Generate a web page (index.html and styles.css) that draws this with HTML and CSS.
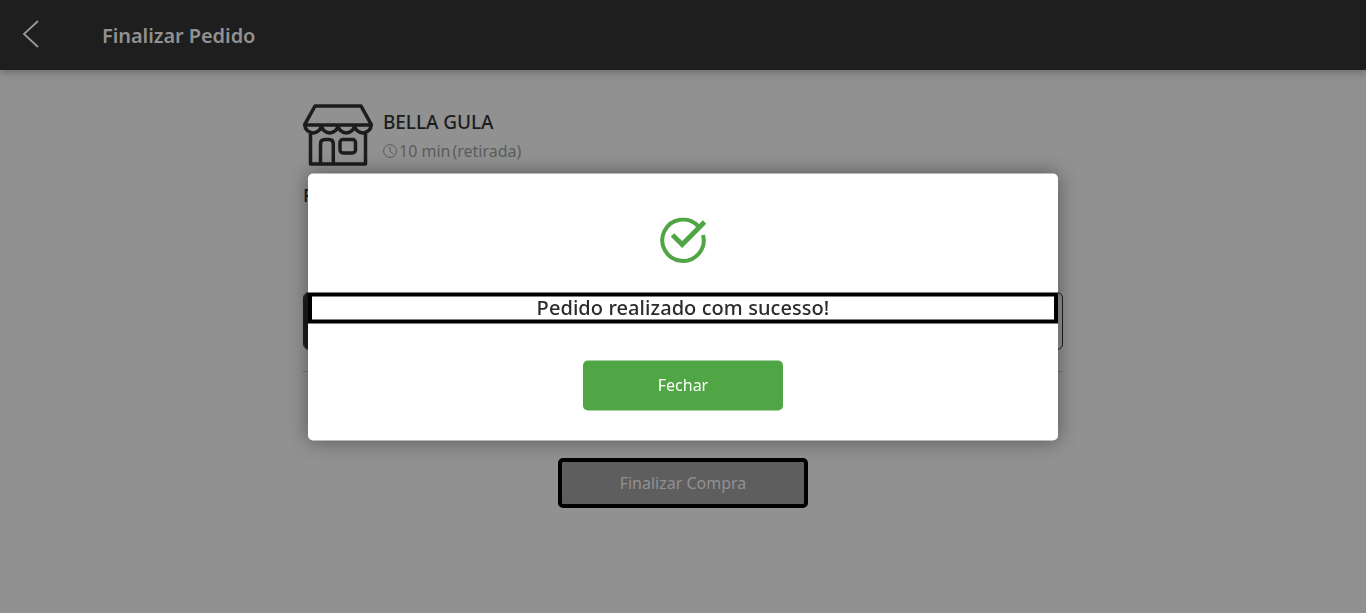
FILE: index.html
```html
<!DOCTYPE html>
<html lang="pt-BR">
<head>
<meta charset="utf-8">
<title>Finalizar Pedido</title>
<link rel="stylesheet" href="styles.css">
</head>
<body>
<header class="topbar">
  <svg class="back" viewBox="0 0 18 28"><path d="M16 1 2 14 16 27"/></svg>
  <h1 class="title">Finalizar Pedido</h1>
</header>
<main class="page">
  <section class="store">
    <svg class="store-icon" viewBox="0 0 70 62">
      <path d="M12 2H58L68.500 21H1.500ZM1.800 21A8.300 7.900 0 0 0 18.400 21A8.300 7.900 0 0 0 35 21A8.300 7.900 0 0 0 51.600 21A8.300 7.900 0 0 0 68.200 21M7.500 28V60H62.500V28M17.500 60V40Q17.500 35.500 22 35.500H26Q30.300 35.500 30.300 40V60"/>
      <rect x="37" y="35.500" width="15.500" height="13.500" rx="3"/>
    </svg>
    <div class="store-info">
      <h2 class="store-name">BELLA GULA</h2>
      <div class="store-time">
        <svg class="clock" viewBox="0 0 14 14"><circle cx="7" cy="7" r="6.400"/><path d="M7 3V7L10 10"/></svg>
        <span>10 min</span><span class="mode">(retirada)</span>
      </div>
    </div>
  </section>
  <h3 class="payment-title">F</h3>
  <div class="payment"><div class="payment-selected"></div></div>
  <hr class="divider">
  <button class="finish">Finalizar Compra</button>
</main>
<div class="overlay">
  <div class="modal" role="dialog">
    <svg class="check" viewBox="0 0 46 46"><path d="M38 8.500A20.700 20.700 0 1 0 43 17.500"/><path class="tick" d="M12.500 17.500 22.200 27 44.500 4.500"/></svg>
    <p class="message">Pedido realizado com sucesso!</p>
    <button class="close">Fechar</button>
  </div>
</div>
</body>
</html>
```
FILE: styles.css
```css
* { box-sizing: border-box; }
body {
  margin: 0;
  height: 613px;
  overflow: hidden;
  background: #919191;
  color: #1c1c1c;
  font-family: "Noto Sans", sans-serif;
}
h1, h2, h3, p { margin: 0; }
svg { display: block; fill: none; flex: none; }
button { display: block; font: 16px "Noto Sans", sans-serif; }
.topbar {
  display: flex;
  align-items: center;
  height: 70px;
  padding-left: 22px;
  background: #1e1e1e;
  box-shadow: 0 2px 8px rgba(0, 0, 0, .28);
}
.back { width: 18px; height: 28px; margin-bottom: 2px; stroke: #999; stroke-width: 1.8; }
.title { margin: 2px 0 0 62px; font-size: 20px; line-height: 28px; font-weight: 600; letter-spacing: -.07px; color: #919191; }
.page { width: 760px; margin: 0 auto; padding-top: 34px; }
.store { display: flex; height: 62px; gap: 10px; }
.store-icon { width: 70px; height: 62px; stroke: #1c1c1c; stroke-width: 3.5; stroke-linejoin: round; }
.store-name { padding-top: 4px; font-size: 19px; line-height: 28px; font-weight: 500; letter-spacing: -.07px; }
.store-time { display: flex; align-items: center; height: 24px; margin-top: 3px; font-size: 16px; color: #5c5c5c; }
.clock { width: 14px; height: 14px; margin-right: 2px; stroke: #5c5c5c; stroke-width: 1; }
.mode { margin-left: 2px; }
.payment-title { margin-top: 16px; font-size: 18px; line-height: 26px; font-weight: 500; }
.payment { height: 58px; margin-top: 84px; border: 1px solid #1c1c1c; border-radius: 6px; overflow: hidden; }
.payment-selected { width: 50%; height: 100%; background: #1c1c1c; }
.divider { height: 1px; margin: 21px 0 0; border: 0; background: #747474; }
.finish {
  width: 250px;
  height: 50px;
  margin: 86px auto 0;
  border: 4px solid #000;
  border-radius: 5px;
  background: #5e5e5e;
  color: #919191;
}
.overlay { position: fixed; inset: 0; display: flex; align-items: center; justify-content: center; }
.modal {
  width: 750px;
  height: 267px;
  padding-top: 44px;
  transform: translateY(.5px);
  border-radius: 5px;
  background: #fff;
  box-shadow: 0 0 20px rgba(0, 0, 0, .4);
}
.check { width: 46px; height: 46px; margin: 0 auto; stroke: #50a544; stroke-width: 4; }
.tick { stroke-width: 4.8; }
.message {
  height: 31px;
  margin-top: 29px;
  border: 4px solid #000;
  font-size: 20px;
  line-height: 21px;
  font-weight: 500;
  letter-spacing: .07px;
  text-align: center;
  color: #2b2b2b;
}
.close {
  width: 200px;
  height: 50px;
  margin: 37px auto 0;
  padding: 0 6px 2px;
  border: 0;
  border-radius: 5px;
  background: #50a544;
  color: #fff;
}
```
